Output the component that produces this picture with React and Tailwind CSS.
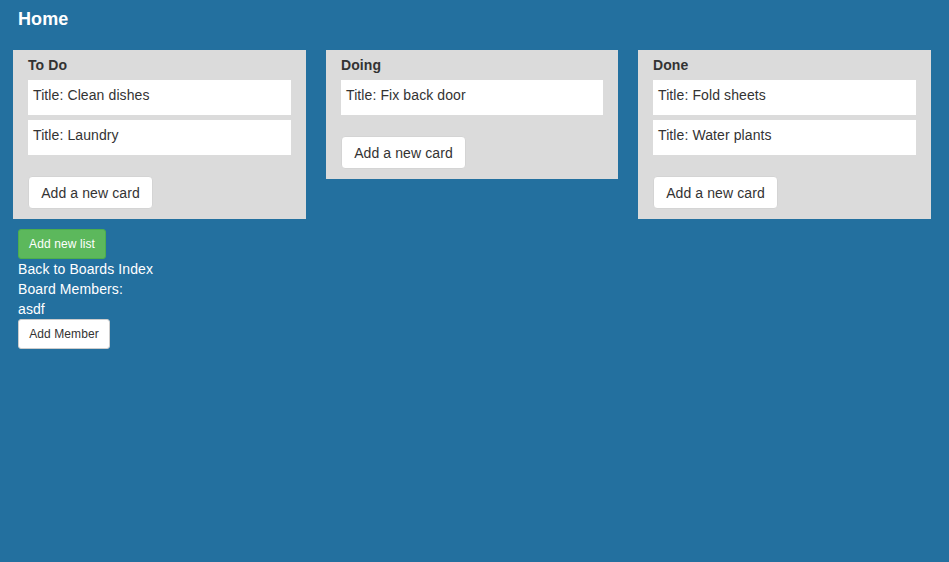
import React from 'react';

const lists = [
  { name: 'To Do', width: 'w-[293px]', cards: ['Clean dishes', 'Laundry'] },
  { name: 'Doing', width: 'w-[292px]', cards: ['Fix back door'] },
  { name: 'Done', width: 'w-[293px]', cards: ['Fold sheets', 'Water plants'] },
];

function List({ list }) {
  return (
    <div className={`${list.width} bg-[#dbdbdb] px-[15px] pt-[5px] pb-[10px]`}>
      <h3 className="text-[14px] leading-[20px] font-bold text-[#333]">{list.name}</h3>
      <div className="mt-[5px] flex flex-col gap-[5px]">
        {list.cards.map((card) => (
          <div key={card} className="bg-white px-[5px] pt-[5px] pb-[10px] text-[14px] leading-[20px] text-[#333]">
            Title: {card}
          </div>
        ))}
      </div>
      <button className="mt-[21px] h-[33px] w-[125px] bg-white border border-[#d4d4d4] rounded-[4px] text-[14px] leading-[20px] text-[#333]">
        Add a new card
      </button>
    </div>
  );
}

export default function App() {
  return (
    <div
      className="min-h-[562px] bg-[#23709f] pl-[18px] text-[14px] leading-[20px] tracking-[0.1px] text-white"
      style={{ fontFamily: '"Liberation Sans", Arial, sans-serif' }}
    >
      {/* Board header */}
      <h1 className="pt-[9px] text-[18px] leading-[20px] font-bold">Home</h1>

      {/* Lists */}
      <div className="mt-[21px] -ml-[5px] flex items-start gap-[20px]">
        {lists.map((list) => (
          <List key={list.name} list={list} />
        ))}
      </div>

      <button className="mt-[10px] h-[30px] w-[88px] bg-[#5cb85c] border border-[#4cae4c] rounded-[3px] text-[12px] text-white">
        Add new list
      </button>
      <div>Back to Boards Index</div>
      <div>Board Members:</div>
      <div>asdf</div>
      <button className="h-[30px] w-[92px] bg-white border border-[#ccc] rounded-[3px] text-[12px] text-[#333]">
        Add Member
      </button>
    </div>
  );
}
